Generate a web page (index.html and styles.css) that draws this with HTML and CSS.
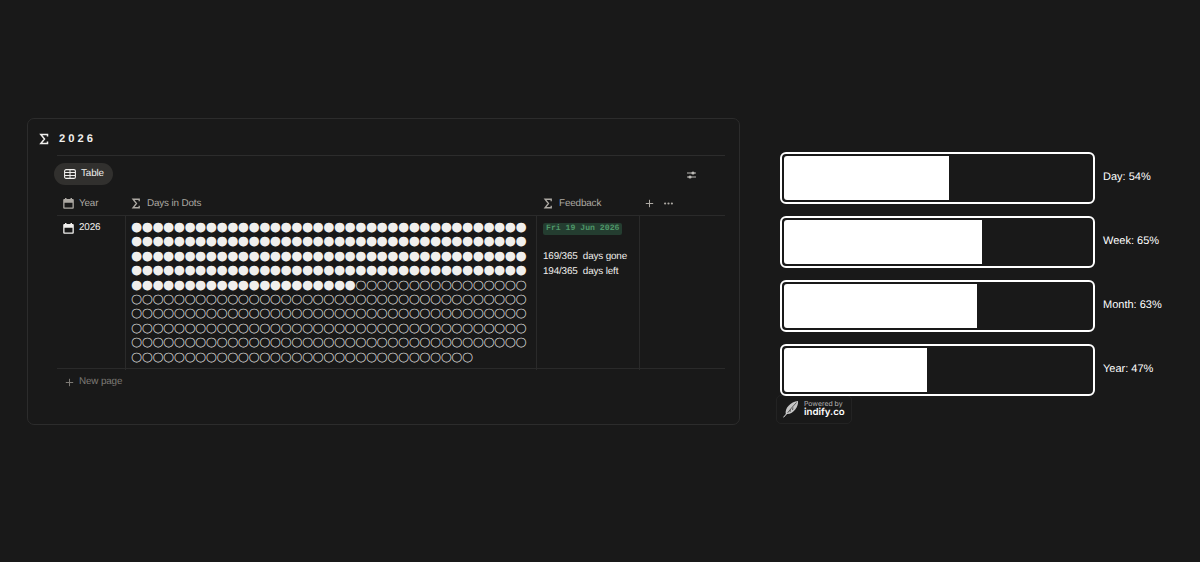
FILE: index.html
```html
<!DOCTYPE html>
<html lang="en">
<head>
  <meta charset="UTF-8">
  <meta name="viewport" content="width=device-width, initial-scale=1.0">
  <title>Days in Dots</title>
  <link rel="stylesheet" href="styles.css">
</head>
<body>
  <!-- Shared icons -->
  <svg class="sprite">
    <symbol id="sigma" viewBox="0 0 10 12">
      <path d="M8.500 3.600V1.400H1.800L5.500 6L1.800 10.600H8.500V8.400" fill="none" stroke="currentColor" stroke-width="1.5"/>
    </symbol>
    <symbol id="calendar" viewBox="0 0 11 11">
      <path d="M2 0h1.500v1h4V0H9v1h.8q1 0 1 1v7.800q0 1-1 1H1.200q-1 0-1-1V2q0-1 1-1H2zM1.500 4.700v4.800h8V4.700z" fill="currentColor" fill-rule="evenodd"/>
    </symbol>
    <symbol id="plus" viewBox="0 0 9 9">
      <path d="M4.500 .8v7.400M.8 4.500h7.400" stroke="currentColor" stroke-width="1"/>
    </symbol>
  </svg>

  <div class="dashboard">
    <div class="card">
      <div class="card-title">
        <svg class="title-icon"><use href="#sigma"/></svg>
        <h1>2026</h1>
      </div>

      <div class="database">
        <div class="toolbar">
          <div class="tab">
            <svg width="12" height="10" viewBox="0 0 12 10" fill="none" stroke="currentColor">
              <rect x=".6" y=".6" width="10.8" height="8.8" rx="1.5" stroke-width="1.1"/>
              <path d="M1 3.500h10M1 6.500h10M6 1v8" stroke-width="1"/>
            </svg>
            <span>Table</span>
          </div>
          <svg class="settings" width="9" height="8" viewBox="0 0 9 8">
            <path d="M0 2h9M0 6h9" stroke="currentColor" stroke-width="1.2"/>
            <circle cx="6" cy="2" r="1.6" fill="currentColor"/>
            <circle cx="3" cy="6" r="1.6" fill="currentColor"/>
          </svg>
        </div>

        <div class="row head">
          <div class="cell"><svg class="cal"><use href="#calendar"/></svg><span>Year</span></div>
          <div class="cell"><svg class="sum"><use href="#sigma"/></svg><span>Days in Dots</span></div>
          <div class="cell"><svg class="sum"><use href="#sigma"/></svg><span>Feedback</span></div>
          <div class="cell actions">
            <svg class="plus"><use href="#plus"/></svg>
            <svg width="9" height="3" viewBox="0 0 9 3" fill="currentColor">
              <circle cx="1.1" cy="1.5" r="1.1"/><circle cx="4.5" cy="1.5" r="1.1"/><circle cx="7.9" cy="1.5" r="1.1"/>
            </svg>
          </div>
        </div>

        <div class="row body">
          <div class="cell year"><svg class="cal"><use href="#calendar"/></svg>2026</div>
          <div class="cell dots" id="dots"></div>
          <div class="cell feedback">
            <p><code>Fri 19 Jun 2026</code></p>
            <p>&nbsp;</p>
            <p>169/365&nbsp; days gone</p>
            <p>194/365&nbsp; days left</p>
          </div>
          <div class="cell"></div>
        </div>

        <div class="new-page"><svg class="plus"><use href="#plus"/></svg>New page</div>
      </div>
    </div>

    <div class="widget">
      <div class="progress">
        <div class="bar"><div class="fill" style="width: 53.7%"></div></div>
        <span>Day: 54%</span>
      </div>
      <div class="progress">
        <div class="bar"><div class="fill" style="width: 64.6%"></div></div>
        <span>Week: 65%</span>
      </div>
      <div class="progress">
        <div class="bar"><div class="fill" style="width: 62.8%"></div></div>
        <span>Month: 63%</span>
      </div>
      <div class="progress">
        <div class="bar"><div class="fill" style="width: 46.6%"></div></div>
        <span>Year: 47%</span>
      </div>
      <div class="badge">
        <svg width="16" height="18" viewBox="0 0 16 18">
          <path d="M2.800 14.200C1.500 8 7.500 2 15 1C15.800 6.500 10.500 14 4.500 14Z" fill="#c4c4c4"/>
          <path d="M4 13.500L8.500 8L13.500 2.500M7 12L7.500 9.500M9.500 10L10 7.500" fill="none" stroke="#2a2a2a" stroke-width=".7"/>
          <path d="M.4 17.400L4.500 12.800" stroke="#e6e6e6" stroke-width="1"/>
        </svg>
        <div>
          <small>Powered by</small>
          <strong>indify.co</strong>
        </div>
      </div>
    </div>
  </div>

  <script>
    // One dot per day, filled for the days already gone
    const gone = 169;
    const total = 365;
    document.getElementById('dots').textContent = '⬤'.repeat(gone) + '◯'.repeat(total - gone);
  </script>
</body>
</html>
```
FILE: styles.css
```css
* {
  box-sizing: border-box;
}

body {
  margin: 0;
  background-color: #191919;
  color: #f0efed;
  font-family: "Liberation Sans", Arial, sans-serif;
  font-size: 9.900px;
  letter-spacing: -0.15px;
  line-height: 14.4px;
  text-rendering: geometricPrecision;
}

svg {
  flex: none;
  display: block;
}

.sprite {
  display: none;
}

.dashboard {
  display: flex;
  align-items: flex-start;
  padding: 118px 0 0 27px;
}

.card {
  width: 713px;
  height: 307px;
  border: 1px solid #2c2c2c;
  border-radius: 7px;
  padding: 0 14px 0 29px;
}

.card-title {
  display: flex;
  align-items: center;
  height: 36px;
  padding-top: 3px;
  margin-left: -18px;
}

.title-icon {
  width: 10px;
  height: 12px;
  margin-right: 10px;
}

.card-title h1 {
  margin: 0;
  padding-top: 1px;
  font-size: 11.200px;
  letter-spacing: 3px;
}

.database {
  border-top: 1px solid #2c2c2c;
}

.toolbar {
  display: flex;
  justify-content: space-between;
  align-items: center;
  height: 36px;
  padding-right: 29px;
}

.tab {
  display: flex;
  align-items: center;
  gap: 5px;
  height: 22px;
  margin-left: -3px;
  padding: 0 9px 0 10px;
  border-radius: 11px;
  background-color: #31302e;
}

.tab span {
  padding-top: 1px;
}

.settings {
  color: #bcbab6;
  margin-top: 2px;
}

.row {
  display: grid;
  grid-template-columns: 69px 411px 103px 1fr;
}

.cell {
  padding: 5px 6px;
}

.head {
  height: 23px;
  color: #ada9a3;
}

.head .cell {
  display: flex;
  align-items: center;
  padding-top: 0;
  padding-bottom: 0;
}

.head span {
  padding-top: 2px;
}

.cal {
  width: 11px;
  height: 11px;
  margin-right: 5px;
}

.sum {
  width: 10px;
  height: 11px;
  margin: 0 6px 0 -1px;
}

.head .cell:nth-child(3) .sum {
  margin-left: 0;
}

.plus {
  width: 9px;
  height: 9px;
}

.head .actions {
  gap: 10px;
  padding-left: 5px;
}

.body {
  height: 154px;
  border-top: 1px solid #2a2a2a;
  border-bottom: 1px solid #2a2a2a;
}

.body .cell {
  border-right: 1px solid #2a2a2a;
}

.body .cell:last-child {
  border-right: 0;
}

.year {
  display: flex;
  align-items: flex-start;
}

.year .cal {
  margin-top: 2px;
}

.body .dots {
  padding-left: 5.300px;
  font-family: "DejaVu Sans", sans-serif;
  font-size: 9.600px;
  letter-spacing: -0.06px;
  word-break: break-all;
}

.body .feedback {
  padding-top: 4.500px;
}

.feedback p {
  margin: 0;
  white-space: nowrap;
}

.feedback code {
  padding: 1px 3px 2px;
  border-radius: 2px;
  background-color: #243d30;
  color: #4f9768;
  font-family: "Liberation Mono", monospace;
  font-size: 8.160px;
  font-weight: bold;
  letter-spacing: 0;
}

.new-page {
  display: flex;
  align-items: center;
  gap: 5px;
  height: 26px;
  padding-left: 8px;
  color: #7d7a75;
}

.widget {
  padding: 34.400px 0 0 40px;
  color: #fff;
  font-size: 11px;
  letter-spacing: 0;
}

.progress {
  display: flex;
  align-items: center;
  gap: 8px;
  margin-bottom: 12.600px;
}

.progress span {
  padding-bottom: 1px;
}

.bar {
  width: 315px;
  height: 51.400px;
  padding: 2px;
  border: 2px solid #fff;
  border-radius: 6px;
}

.fill {
  height: 100%;
  border-radius: 3px 0 0 3px;
  background-color: #fff;
}

.badge {
  display: flex;
  align-items: center;
  gap: 5px;
  width: 76px;
  height: 29px;
  margin: -13px 0 0 -4px;
  padding: 0 0 2px 6px;
  border: 1px solid #232323;
  border-radius: 5px;
}

.badge small,
.badge strong {
  display: block;
  font-family: Inter, sans-serif;
}

.badge small {
  color: #b5b5b5;
  font-size: 6.900px;
  line-height: 8px;
}

.badge strong {
  font-size: 9.700px;
  font-weight: 600;
  line-height: 10px;
}
```
